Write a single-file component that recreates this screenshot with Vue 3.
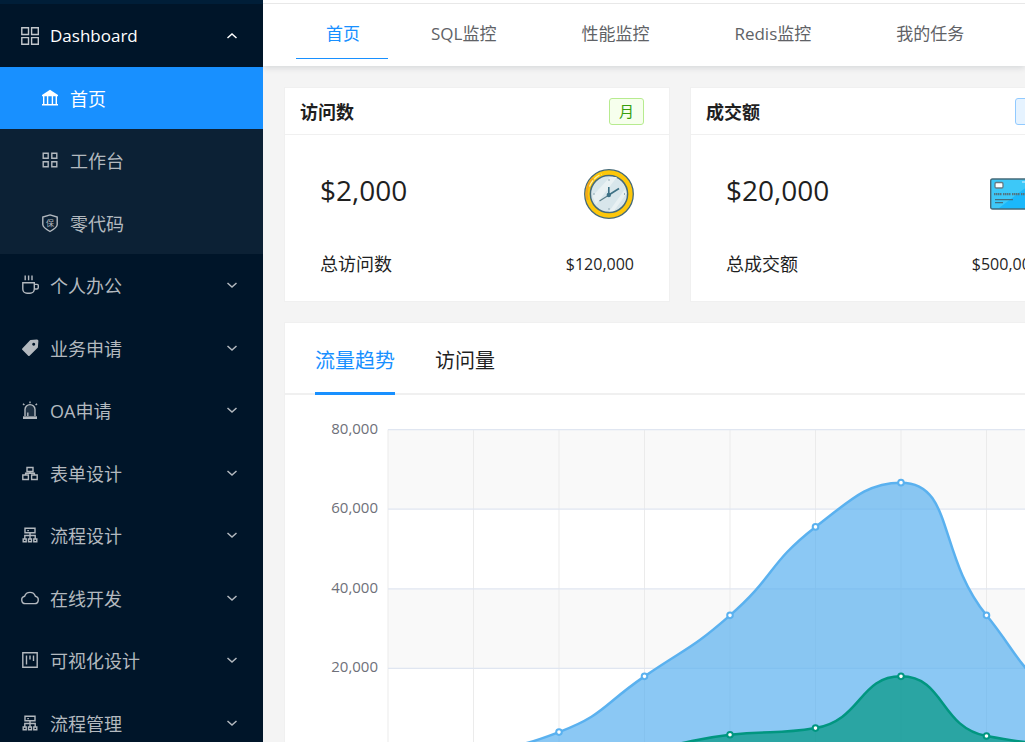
<script setup>
const icons = {
  grid: [
    { d: 'M1.8 1.8h6.7v6.7H1.8zM11.6 1.8h6.7v6.7h-6.7zM1.8 11.6h6.7v6.7H1.8zM11.6 11.6h6.7v6.7h-6.7z' }
  ],
  bank: [
    { d: 'M10 1.8L18 7v1.3H2V7z', fill: true },
    { d: 'M3.7 8v8M7.6 8v8M12.4 8v8M16.3 8v8M2 16.8h16' }
  ],
  smallGrid: [
    { d: 'M3.2 3.2h5v5h-5zM11.8 3.2h5v5h-5zM3.2 11.8h5v5h-5zM11.8 11.8h5v5h-5z' }
  ],
  shield: [{ d: 'M10 1.9L17.2 4.1v7.4c0 3-3.4 4.9-7.2 7-3.800-2.100-7.200-4-7.200-7V4.100z' }],
  coffee: [
    { d: 'M5.200 .6v4.600M8.600 .6v4.600M12 .6v4.600' },
    { d: 'M2.800 7.800h11.500V14a4.300 4.300 0 0 1-4.300 4.300H7.100A4.300 4.300 0 0 1 2.800 14zM14.500 9.400h2.700q1.100 0 1.100 1.100v2q0 1.500-1.500 1.500h-2.300' }
  ],
  tag: [
    {
      d: 'M10.600 2.100L16.800 1.500Q18.500 1.400 18.400 3L17.900 9.200Q17.800 9.700 17.400 10.100L9.600 17.700Q8.900 18.300 8.200 17.700L2.300 11.800Q1.600 11.100 2.300 10.400L9.600 2.700Q10 2.200 10.600 2.100zM13.700 4.800a1.500 1.500 0 1 0 .01 0z',
      fill: true
    }
  ],
  alert: [
    { d: 'M5 16V9.600a5 5 0 0 1 10 0V16z', shade: true },
    { d: 'M5 16V9.600a5 5 0 0 1 10 0V16M7.800 12.500V16M10 1.500v1.700M3 3.700l1.400 1.400M17 3.700l-1.400 1.400' },
    { d: 'M3 16.300h14V19H3z', fill: true }
  ],
  blocks: [
    { d: 'M7 4.500h6v4H7zM2.800 12h5.600v4.500H2.800zM11.600 12h5.600v4.500h-5.600zM10 8.500v1.700M5.600 12v-1.800h8.800V12' }
  ],
  flow: [
    { d: 'M5 3.300h10v4.500H5zM7.300 5.600h1.600M10 8v6M4.800 13.500v-3h10.400v3M3.200 14h3v2.800h-3zM8.500 14h3v2.800h-3zM13.800 14h3v2.800h-3z' }
  ],
  cloud: [
    { d: 'M5.400 15.600a3.700 3.700 0 0 1-.8-7.300 5.700 5.700 0 0 1 10.800 0 3.700 3.700 0 0 1-.8 7.300z' }
  ],
  board: [{ d: 'M2.800 2.800h14.400v14.400H2.800zM6.500 5.500v9M10 5.500v4M13.500 5.500v5.500' }]
}

const subItems = [
  { label: '首页', icon: 'bank', active: true },
  { label: '工作台', icon: 'smallGrid' },
  { label: '零代码', icon: 'shield', mark: '保' }
]
const menu = [
  { label: '个人办公', icon: 'coffee' },
  { label: '业务申请', icon: 'tag' },
  { label: 'OA申请', icon: 'alert' },
  { label: '表单设计', icon: 'blocks' },
  { label: '流程设计', icon: 'flow' },
  { label: '在线开发', icon: 'cloud' },
  { label: '可视化设计', icon: 'board' },
  { label: '流程管理', icon: 'flow' }
]
const tabs = ['首页', 'SQL监控', '性能监控', 'Redis监控', '我的任务']
const stats = [
  { title: '访问数', tag: '月', color: 'green', value: '$2,000', label: '总访问数', total: '$120,000', art: 'clock' },
  { title: '成交额', tag: '', color: 'blue', value: '$20,000', label: '总成交额', total: '$500,000', art: 'card' }
]

const left = 103
const step = 85.5
const base = 353
const unit = 318.4 / 80000
const visits = [111, 222, 4000, 18000, 33333, 55555, 66666, 33333, 14000, 36000, 66666, 44444, 22222]
const orders = [33, 66, 88, 333, 3333, 5000, 18000, 3000, 1200, 13000, 22000, 11000, 2221]
const toPoints = (data) => data.map((v, i) => [left + i * step, base - v * unit])

// Smooth cubic path whose control points stay between neighbouring values.
function curve(pts) {
  const clamp = (v, a, b) => Math.max(Math.min(v, Math.max(a, b)), Math.min(a, b))
  let out = `M${pts[0][0]} ${pts[0][1]}`
  let [c0x, c0y] = pts[0]
  for (let i = 1; i < pts.length; i++) {
    const [px, py] = pts[i - 1]
    const [x, y] = pts[i]
    let c1x = x
    let c1y = y
    let nx0 = x
    let ny0 = y
    if (i < pts.length - 1) {
      const [nx, ny] = pts[i + 1]
      const lp = Math.hypot(x - px, y - py)
      const ln = Math.hypot(nx - x, ny - y)
      const r = ln / (ln + lp)
      nx0 = clamp(x + (nx - px) * 0.5 * r, nx, x)
      ny0 = clamp(y + (ny - py) * 0.5 * r, ny, y)
      c1x = clamp(x - ((nx0 - x) * lp) / ln, px, x)
      c1y = clamp(y - ((ny0 - y) * lp) / ln, py, y)
      nx0 = x + ((x - c1x) * ln) / lp
      ny0 = y + ((y - c1y) * ln) / lp
    }
    out += `C${c0x} ${c0y} ${c1x} ${c1y} ${x} ${y}`
    c0x = nx0
    c0y = ny0
  }
  return out
}
const series = [
  { name: 'visits', pts: toPoints(visits) },
  { name: 'orders', pts: toPoints(orders) }
].map((s) => {
  const line = curve(s.pts)
  return { ...s, line, area: `${line}L${s.pts[s.pts.length - 1][0]} ${base}L${left} ${base}Z` }
})
const chartWidth = left + step * (visits.length - 1)
const ticks = [80000, 60000, 40000, 20000, 0].map((v) => ({
  label: v.toLocaleString('en-US'),
  y: base - v * unit
}))
</script>

<template>
  <div class="app">
    <aside class="side">
      <nav class="nav">
        <button class="row open" type="button" aria-expanded="true">
          <svg class="icon" viewBox="0 0 20 20"><path v-for="p in icons.grid" :key="p.d" :d="p.d" /></svg>
          <span class="label">Dashboard</span>
          <svg class="chev" viewBox="0 0 12 12"><path d="M1.500 8L6 4l4.500 4" /></svg>
        </button>
        <div class="sub">
          <a v-for="s in subItems" :key="s.label" href="#" class="row child" :class="{ active: s.active }">
            <svg class="icon" viewBox="0 0 20 20">
              <path v-for="p in icons[s.icon]" :key="p.d" :d="p.d" :class="{ solid: p.fill }" />
              <text v-if="s.mark" x="10" y="13" text-anchor="middle">{{ s.mark }}</text>
            </svg>
            <span class="label">{{ s.label }}</span>
          </a>
        </div>
        <div class="groups">
          <button v-for="m in menu" :key="m.label" class="row" type="button" aria-expanded="false">
            <svg class="icon" viewBox="0 0 20 20">
              <path v-for="p in icons[m.icon]" :key="p.d" :d="p.d" :class="{ solid: p.fill, shade: p.shade }" />
            </svg>
            <span class="label">{{ m.label }}</span>
            <svg class="chev" viewBox="0 0 12 12"><path d="M1.500 4L6 8l4.500-4" /></svg>
          </button>
        </div>
      </nav>
    </aside>

    <main class="main">
      <nav class="tabs">
        <a v-for="(t, i) in tabs" :key="t" href="#" class="tab" :class="{ current: i === 0 }">{{ t }}</a>
      </nav>

      <section class="stats">
        <article v-for="c in stats" :key="c.title" class="card stat">
          <header class="stat-head">
            <h2>{{ c.title }}</h2>
            <span class="tag" :class="c.color">{{ c.tag }}</span>
          </header>
          <div class="stat-body">
            <div class="line big">
              <span>{{ c.value }}</span>
              <svg v-if="c.art === 'clock'" class="art" viewBox="0 0 50 50">
                <circle cx="25" cy="25" r="24.300" fill="#fdc70a" stroke="#466a78" stroke-width="1.300" />
                <path d="M3.500 31A22.500 22.500 0 0 1 9 9" fill="none" stroke="#f2a91b" stroke-width="2.500" />
                <path d="M5.500 17.500Q8.500 9.500 17.500 5" fill="none" stroke="#fff1a5" stroke-width="1.200" stroke-dasharray="7 1.500" />
                <circle cx="25" cy="25" r="18.600" fill="#d8e6eb" stroke="#466a78" stroke-width="1.500" />
                <path d="M8.500 27L26 8h7L12 35.500zM25 42.500L41 20l1.500 4.500L30 42z" fill="#e9f1f3" />
                <path d="M25 10.500v1M25 39.500v1M9.500 25h1M40 25h1" stroke="#466a78" stroke-width="1" />
                <path d="M24.800 25.500V18M24.800 26L35 19.500" fill="none" stroke="#3d7185" stroke-width="1.600" />
                <path d="M25 26L15.500 32" stroke="#5b7f8b" stroke-width="1.200" />
                <circle cx="24.800" cy="26" r="2.200" fill="#3d7185" />
              </svg>
              <svg v-else class="art" viewBox="0 0 50 50">
                <rect x=".7" y="10" width="48.600" height="30" rx="1.800" fill="#1bb8fb" />
                <path d="M1 10h46L9 39H1z" fill="#3dc8f8" />
                <path d="M32 13h12" stroke="#a8e5ff" stroke-width="1.500" />
                <rect x=".7" y="10" width="48.600" height="30" rx="1.800" fill="none" stroke="#466a78" stroke-width="1.400" />
                <rect x="5" y="13.500" width="8" height="5.500" rx="1.300" fill="#fff" stroke="#667983" stroke-width="1.300" />
                <path d="M4 25.200h42" stroke="#527582" stroke-width="2.200" stroke-dasharray="1.500 .5 1.500 .5 1.500 .5 1.500 1.500" />
                <path d="M5 30.700h18M5 33.700h8" stroke="#446f80" stroke-width="1.200" />
              </svg>
            </div>
            <div class="line">
              <span class="name">{{ c.label }}</span>
              <span class="total">{{ c.total }}</span>
            </div>
          </div>
        </article>
      </section>

      <section class="card trend">
        <div class="trend-tabs" role="tablist">
          <button type="button" role="tab" aria-selected="true" class="trend-tab on">流量趋势</button>
          <button type="button" role="tab" aria-selected="false" class="trend-tab">访问量</button>
        </div>
        <svg class="chart" :width="chartWidth" height="400">
          <rect class="band" :x="left" :y="ticks[0].y" :width="chartWidth" :height="20000 * unit" />
          <rect class="band" :x="left" :y="ticks[2].y" :width="chartWidth" :height="20000 * unit" />
          <line
            v-for="(p, i) in series[0].pts" :key="'v' + i" class="vline"
            :x1="p[0]" :x2="p[0]" :y1="ticks[0].y" :y2="base"
          />
          <g v-for="t in ticks" :key="t.label">
            <line class="hline" :x1="left" :x2="chartWidth" :y1="t.y" :y2="t.y" />
            <text class="tick" :x="left - 10" :y="t.y + 4" text-anchor="end">{{ t.label }}</text>
          </g>
          <g v-for="s in series" :key="s.name" :class="s.name">
            <path class="area" :d="s.area" />
            <path class="stroke" :d="s.line" />
          </g>
          <g v-for="s in series" :key="s.name + 'dots'" :class="s.name">
            <circle v-for="(p, i) in s.pts" :key="i" class="dot" :cx="p[0]" :cy="p[1]" r="2.800" />
          </g>
        </svg>
      </section>
    </main>
  </div>
</template>

<style>
body {
  margin: 0;
  background: #f4f4f4;
}
</style>

<style scoped>
.app {
  display: flex;
  height: 100vh;
  overflow: hidden;
  font-family: "Open Sans", "Noto Sans CJK SC", sans-serif;
  font-size: 17px;
  color: #1f1f1f;
}
.side {
  flex: none;
  width: 263px;
  overflow: hidden;
  background: #001529;
  border-top: 4px solid #001e38;
  box-sizing: border-box;
}
.nav,
.groups,
.sub {
  display: grid;
}
.sub {
  grid-auto-rows: 1fr;
  min-height: 187px;
  background: #0c2135;
}
.groups {
  grid-auto-rows: 1fr;
  min-height: 500px;
}
.row {
  display: flex;
  align-items: center;
  gap: 10px;
  padding: 0 25px 0 20px;
  border: 0;
  background: none;
  color: #b3b9bf;
  font: inherit;
  font-size: 18px;
  text-align: left;
  text-decoration: none;
}
.open {
  height: 63px;
  color: #fff;
  font-size: 17px;
}
.child {
  padding-left: 40px;
}
.active {
  background: #1890ff;
  color: #fff;
}
.label {
  flex: 1;
}
.icon {
  width: 20px;
  height: 20px;
  fill: none;
  stroke: currentColor;
  stroke-width: 1.4;
}
.open .icon {
  color: #c3c8cd;
}
.icon .solid {
  fill: currentColor;
  fill-rule: evenodd;
  stroke: none;
}
.icon .shade {
  fill: #1d3042;
  stroke: none;
}
.icon text {
  fill: currentColor;
  stroke: none;
  font-size: 8px;
}
.chev {
  width: 12px;
  height: 12px;
  fill: none;
  stroke: currentColor;
  stroke-width: 1.5;
}
.main {
  flex: 1;
  min-width: 0;
  overflow: hidden;
}
.tabs {
  display: flex;
  gap: 15px;
  height: 62px;
  padding: 0 33px;
  border-top: 1px solid #e8e8e8;
  margin-top: 3px;
  background: #fff;
  box-shadow: 0 -3px 0 #fff, 0 2px 6px rgba(0, 21, 41, 0.12);
}
.tab {
  flex: none;
  height: 54px;
  padding: 0 42px 0 28px;
  border-bottom: 1px solid transparent;
  color: #606266;
  font-size: 17px;
  line-height: 60px;
  text-decoration: none;
}
.tab.current {
  padding: 0 28px 0 30px;
  border-color: #1890ff;
  color: #1890ff;
}
.card {
  background: #fff;
  border: 1px solid #f0f0f0;
  box-sizing: border-box;
}
.stats {
  display: flex;
  gap: 20px;
  padding: 21px 21px 20px;
}
.stat {
  flex: none;
  width: 386px;
}
.stat-head {
  display: flex;
  align-items: center;
  justify-content: space-between;
  height: 46px;
  padding: 0 25px 0 15px;
  border-bottom: 1px solid #f0f0f0;
}
.stat-head h2 {
  margin: 0;
  font-size: 18px;
  font-weight: 700;
}
.tag {
  box-sizing: border-box;
  width: 35px;
  height: 27px;
  border: 1px solid;
  border-radius: 3px;
  font-size: 15px;
  line-height: 25px;
  text-align: center;
}
.green {
  color: #389e0d;
  background: #f6ffed;
  border-color: #b7eb8f;
}
.blue {
  color: #096dd9;
  background: #e6f3ff;
  border-color: #91caff;
}
.stat-body {
  padding: 34px 35px 23px;
}
.line {
  display: flex;
  align-items: center;
  justify-content: space-between;
  line-height: 28px;
}
.big {
  margin-bottom: 31px;
  font-size: 28px;
}
.big span {
  margin-bottom: 8px;
}
.name {
  font-size: 18px;
}
.total {
  font-size: 16px;
}
.art {
  width: 50px;
  height: 50px;
}
.trend {
  margin-left: 21px;
  border-right: 0;
  overflow: hidden;
}
.trend-tabs {
  display: flex;
  gap: 40px;
  height: 70px;
  padding: 0 30px;
  border-bottom: 2px solid #f0f0f0;
}
.trend-tab {
  box-sizing: border-box;
  height: 72px;
  padding: 4px 0 0;
  border: 0;
  border-bottom: 3px solid transparent;
  background: none;
  color: #1f1f1f;
  font: inherit;
  font-size: 20px;
}
.trend-tab.on {
  border-color: #1890ff;
  color: #1890ff;
}
.chart {
  display: block;
}
.band {
  fill: #f9f9f9;
}
.vline {
  stroke: #ebebeb;
}
.hline {
  stroke: #e0e6f1;
  stroke-width: 1.25;
}
.tick {
  fill: #6e7079;
  font-size: 15px;
}
.visits {
  color: #5ab1ef;
}
.orders {
  color: #019680;
}
.area {
  fill: currentColor;
  opacity: 0.7;
}
.stroke {
  fill: none;
  stroke: currentColor;
  stroke-width: 2.5;
}
.dot {
  fill: #fff;
  stroke: currentColor;
  stroke-width: 2;
}
</style>
